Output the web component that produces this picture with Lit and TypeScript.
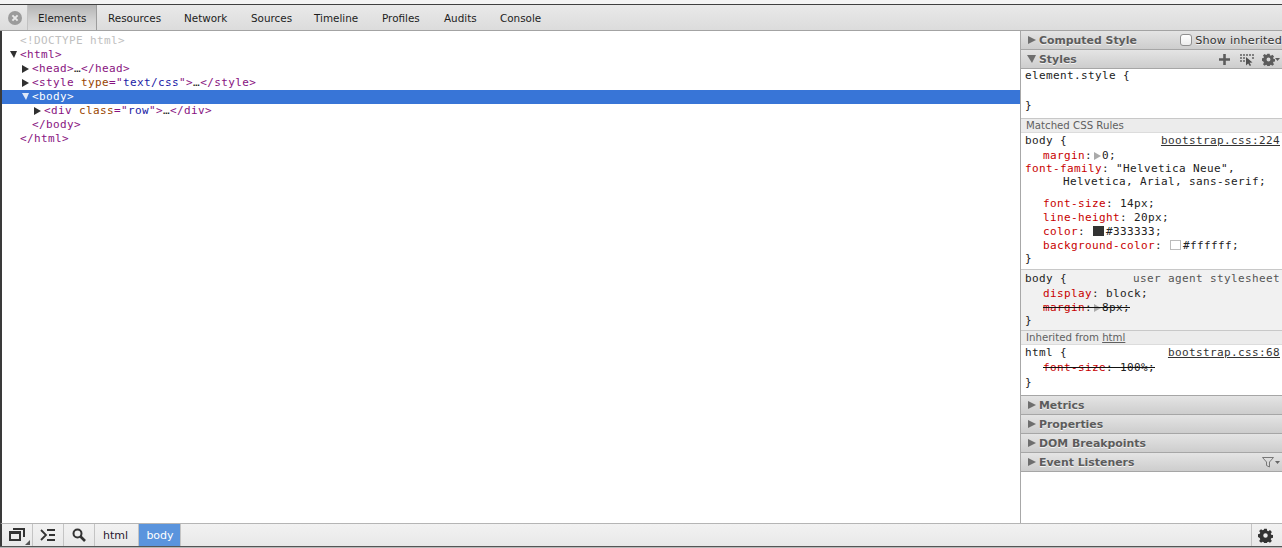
import { LitElement, html, css } from "lit";
import { customElement } from "lit/decorators.js";

const gear = (size: number, fill: string) => html`<svg width=${size} height=${size} viewBox="0 0 16 16"><path fill=${fill} fill-rule="evenodd" d="M6.6 0.8h2.8l.4 2.1 1.2.5 1.8-1.2 2 2-1.2 1.8.5 1.2 2.1.4v2.8l-2.1.4-.5 1.2 1.2 1.8-2 2-1.8-1.2-1.2.5-.4 2.1H6.6l-.4-2.1-1.2-.5-1.8 1.2-2-2 1.2-1.8-.5-1.2L-.2 9.4V6.6l2.1-.4.5-1.2L1.2 3.2l2-2L5 2.4l1.2-.5zM8 5.6a2.4 2.4 0 1 0 0 4.8 2.4 2.4 0 0 0 0-4.8z"/></svg>`;

const tabs = ["Elements", "Resources", "Network", "Sources", "Timeline", "Profiles", "Audits", "Console"];

@customElement("app-root")
export class AppRoot extends LitElement {
  static styles = css`
    :host { display: flex; flex-direction: column; height: 548px; width: 1282px; overflow: hidden; background: #fff; box-sizing: border-box; font-family: "DejaVu Sans Mono", monospace; font-size: 11px; color: #222; }
    .top { height: 4px; background: #f4f4f4; flex: none; }
    .toolbar { height: 27px; flex: none; box-sizing: border-box; display: flex; align-items: stretch; border-top: 1px solid #404040; border-bottom: 1px solid #a3a3a3; background: linear-gradient(#e9e9e9, #dcdcdc); font-family: "DejaVu Sans", sans-serif; font-size: 10.4px; color: #1d1d1d; padding-left: 2px; }
    .close { width: 25px; display: flex; align-items: center; justify-content: center; flex: none; }
    .tab { padding: 1px 11px 0; display: flex; align-items: center; flex: none; white-space: nowrap; box-sizing: content-box; }
    .tab.w0 { width: 48px; background: linear-gradient(#b4b4b4, #d2d2d2 60%, #dcdcdc); border-left: 1px solid #c2c2c2; border-right: 1px solid #9c9c9c; padding: 1px 10px 0; }
    .tab.w1 { width: 54px; } .tab.w2 { width: 45px; } .tab.w3 { width: 41px; } .tab.w4 { width: 46px; } .tab.w5 { width: 40px; } .tab.w6 { width: 34px; } .tab.w7 { width: 43px; }
    .main { flex: 1; display: flex; min-height: 0; border-left: 2px solid #3a3a3a; }
    .tree { flex: 1; padding-top: 3px; min-width: 0; }
    .line { height: 14px; line-height: 14px; white-space: pre; letter-spacing: 0.38px; display: flex; align-items: center; }
    .in0 { padding-left: 18px; } .in1 { padding-left: 30px; } .in2 { padding-left: 42px; }
    .tg { color: #881280; } .an { color: #994500; } .av { color: #1a1aa6; }
    .doctype { color: #c0c0c0; }
    .sel { background: #3875d7; color: #fff; }
    .sel .tg { color: #fff; }
    .ar { width: 0; height: 0; margin-left: -10px; margin-right: 3px; flex: none; }
    .ar.rt { border-left: 7px solid #303030; border-top: 4px solid transparent; border-bottom: 4px solid transparent; }
    .ar.dn { border-top: 7px solid #303030; border-left: 4px solid transparent; border-right: 3px solid transparent; margin-top: -2px; }
    .sel .ar.dn { border-top-color: #dfe9f8; }

    .side { width: 261px; flex: none; border-left: 1px solid #a8a8a8; display: flex; flex-direction: column; }
    .hd { height: 19px; box-sizing: border-box; flex: none; display: flex; align-items: center; padding-left: 7px; border-bottom: 1px solid #a6a6a6; background: linear-gradient(#e4e4e4, #cdcdcd); font-family: "DejaVu Sans", sans-serif; font-weight: bold; font-size: 10.9px; color: #5c5c5c; text-shadow: 0 1px 0 #f4f4f4; white-space: nowrap; }
    .hd .t { width: 0; height: 0; flex: none; margin-right: 3px; }
    .hd .t.rt { border-left: 8px solid #6e6e6e; border-top: 4.5px solid transparent; border-bottom: 4.5px solid transparent; }
    .hd .t.dn { border-top: 8px solid #6e6e6e; border-left: 5px solid transparent; border-right: 4px solid transparent; margin-left: -1px; }
    .sp { flex: 1; }
    .inh { display: flex; align-items: center; font-weight: normal; color: #333; font-size: 11.2px; letter-spacing: 0.2px; gap: 3px; padding-right: 0; }
    .cb { width: 12px; height: 12px; box-sizing: border-box; border: 1px solid #8f8f8f; border-radius: 3px; background: linear-gradient(#fff, #ececec); }
    .icons { display: flex; align-items: center; padding-right: 2px; }
    .hd svg { display: block; }
    .ic2 { margin-left: 10px; } .ic3 { margin-left: 8px; display: flex; align-items: center; } .ic4 { margin-left: -1px; }
    .block { padding: 0 2px 0 4px; }
    .row { height: 14px; line-height: 14px; white-space: pre; letter-spacing: 0.38px; display: flex; justify-content: space-between; align-items: center; }
    .p { padding-left: 18px; display: flex; align-items: center; }
    .p2 { padding-left: 38px; }
    .nm { color: #c80000; }
    .link { color: #333; text-decoration: underline; }
    .ua { color: #555; }
    .b1 { height: 49px; flex: none; box-sizing: border-box; }
    .sub { height: 15px; box-sizing: border-box; flex: none; background: #ececec; border-top: 1px solid #c8c8c8; border-bottom: 1px solid #dcdcdc; padding-left: 5px; font-family: "DejaVu Sans", sans-serif; font-size: 10.2px; line-height: 13px; color: #5f5f5f; white-space: nowrap; }
    .sub u { color: #5f5f5f; }
    .b2 { flex: none; height: 137px; box-sizing: border-box; padding-top: 1px; border-bottom: 1px solid #c8c8c8; }
    .b3 { flex: none; height: 60px; box-sizing: border-box; padding-top: 2px; background: #f1f1f1; }
    .b4 { flex: none; height: 51px; box-sizing: border-box; padding-top: 1px; border-bottom: 1px solid #a6a6a6; }
    .mt1 { margin-top: 1px; } .mt8 { margin-top: 8px; } .mt16 { margin-top: 16px; } .mtn1 { margin-top: -1px; }
    .tri { width: 0; height: 0; border-left: 7px solid #aaa; border-top: 4px solid transparent; border-bottom: 4px solid transparent; margin: 0 1px 0 2px; }
    .sw { width: 11px; height: 10px; box-sizing: border-box; margin: 0 2px 3px 1px; border: 1px solid #bbb; }
    .sw.dark { background: #333; border-color: #333; }
    .strike { position: relative; display: flex; align-items: center; }
    .strike::after { content: ""; position: absolute; left: 18px; right: 0; top: 6px; height: 1px; background: #111; }

    .status { height: 23px; flex: none; box-sizing: border-box; display: flex; align-items: stretch; border-top: 1px solid #b5b5b5; background: linear-gradient(#f2f2f2, #e8e8e8); border-left: 2px solid #3a3a3a; font-family: "DejaVu Sans", sans-serif; font-size: 11px; }
    .btn { width: 30px; flex: none; display: flex; align-items: center; justify-content: center; border-right: 1px solid #c4c4c4; position: relative; }
    .corner { position: absolute; right: 2px; bottom: 1px; width: 0; height: 0; border-left: 5px solid transparent; border-bottom: 5px solid #555; }
    .crumb { display: flex; align-items: center; justify-content: center; flex: none; box-sizing: border-box; }
    .crumb.c1 { width: 44px; padding-right: 2px; border-right: 1px solid #c4c4c4; color: #2a1830; }
    .crumb.c2 { width: 42px; padding-left: 1px; background: #5a94dd; color: #fff; border-right: 1px solid #c4c4c4; }
    .btn.g { width: 31px; padding-right: 3px; box-sizing: border-box; border-right: none; border-left: 1px solid #c4c4c4; }
    .bottom { height: 2px; flex: none; background: #b8b8b8; border-top: 1px solid #555; box-sizing: border-box; }
  `;

  render() {
    return html`
      <div class="top"></div>
      <div class="toolbar">
        <div class="close">
          <svg width="14" height="14" viewBox="0 0 14 14"><circle cx="7" cy="7" r="7" fill="#9b9b9b"/><path d="M4.4 4.4l5.2 5.2M9.6 4.4l-5.2 5.2" stroke="#e8e8e8" stroke-width="2"/></svg>
        </div>
        ${tabs.map((t, i) => html`<div class="tab w${i}">${t}</div>`)}
      </div>
      <div class="main">
        <div class="tree">
          <div class="line in0 doctype">&lt;!DOCTYPE html&gt;</div>
          <div class="line in0"><span class="ar dn"></span><span class="tg">&lt;html&gt;</span></div>
          <div class="line in1"><span class="ar rt"></span><span class="tg">&lt;head&gt;</span>…<span class="tg">&lt;/head&gt;</span></div>
          <div class="line in1"><span class="ar rt"></span><span><span class="tg">&lt;style</span> <span class="an">type</span><span class="tg">="</span><span class="av">text/css</span><span class="tg">"&gt;</span>…<span class="tg">&lt;/style&gt;</span></span></div>
          <div class="line in1 sel"><span class="ar dn"></span><span class="tg">&lt;body&gt;</span></div>
          <div class="line in2"><span class="ar rt"></span><span><span class="tg">&lt;div</span> <span class="an">class</span><span class="tg">="</span><span class="av">row</span><span class="tg">"&gt;</span>…<span class="tg">&lt;/div&gt;</span></span></div>
          <div class="line in1"><span class="tg">&lt;/body&gt;</span></div>
          <div class="line in0"><span class="tg">&lt;/html&gt;</span></div>
        </div>
        <div class="side">
          <div class="hd"><span class="t rt"></span>Computed Style<span class="sp"></span><span class="inh"><span class="cb"></span>Show inherited</span></div>
          <div class="hd"><span class="t dn"></span>Styles<span class="sp"></span>
            <span class="icons">
              <svg width="11" height="11" viewBox="0 0 11 11"><path d="M4.2 0h2.6v4.2H11v2.6H6.8V11H4.2V6.8H0V4.2h4.2z" fill="#5c5c5c"/></svg>
              <svg class="ic2" width="14" height="13" viewBox="0 0 14 13"><path d="M0 1h2v2H0zM3 1h2v2H3zM6 1h2v2H6zM9 1h2v2H9zM12 1h2v2h-2zM0 4h2v2H0zM3 4h2v2H3zM0 7h2v2H0zM3 7h2v2H3zM12 4h2v2h-2z" fill="#808080"/><path d="M6 4l0 8.5 2.2-2 1.6 2.5 1.3-.8-1.5-2.4 2.9-.3z" fill="#505050"/></svg>
              <span class="ic3">${gear(13, "#5c5c5c")}<svg width="5" height="3" viewBox="0 0 5 3"><path d="M0 0h5L2.5 3z" fill="#5c5c5c"/></svg></span>
            </span>
          </div>
          <div class="block b1">
            <div class="row">element.style {</div>
            <div class="row mt16">}</div>
          </div>
          <div class="sub">Matched CSS Rules</div>
          <div class="block b2">
            <div class="row"><span>body {</span><span class="link">bootstrap.css:224</span></div>
            <div class="row mt1"><span class="p"><span class="nm">margin</span>:<span class="tri"></span>0;</span></div>
            <div class="row mtn1"><span><span class="nm">font-family</span>: "Helvetica Neue",</span></div>
            <div class="row mtn1"><span class="p2">Helvetica, Arial, sans-serif;</span></div>
            <div class="row mt8"><span class="p"><span class="nm">font-size</span>: 14px;</span></div>
            <div class="row"><span class="p"><span class="nm">line-height</span>: 20px;</span></div>
            <div class="row"><span class="p"><span class="nm">color</span>: <span class="sw dark"></span>#333333;</span></div>
            <div class="row"><span class="p"><span class="nm">background-color</span>: <span class="sw"></span>#ffffff;</span></div>
            <div class="row mtn1">}</div>
          </div>
          <div class="block b3">
            <div class="row"><span>body {</span><span class="ua">user agent stylesheet</span></div>
            <div class="row mt1"><span class="p"><span class="nm">display</span>: block;</span></div>
            <div class="row"><span class="p strike"><span class="nm">margin</span>:<span class="tri"></span>8px;</span></div>
            <div class="row mtn1">}</div>
          </div>
          <div class="sub">Inherited from <u>html</u></div>
          <div class="block b4">
            <div class="row"><span>html {</span><span class="link">bootstrap.css:68</span></div>
            <div class="row mt1"><span class="p strike"><span class="nm">font-size</span>: 100%;</span></div>
            <div class="row mt1">}</div>
          </div>
          <div class="hd"><span class="t rt"></span>Metrics</div>
          <div class="hd"><span class="t rt"></span>Properties</div>
          <div class="hd"><span class="t rt"></span>DOM Breakpoints</div>
          <div class="hd"><span class="t rt"></span>Event Listeners<span class="sp"></span>
            <span class="icons">
              <svg width="14" height="11" viewBox="0 0 14 11"><path d="M.5.5h11L7.5 5v5L4.5 8.5V5z" fill="none" stroke="#777"/></svg><svg class="ic4" width="5" height="3" viewBox="0 0 5 3"><path d="M0 0h5L2.5 3z" fill="#666"/></svg>
            </span>
          </div>
        </div>
      </div>
      <div class="status">
        <div class="btn">
          <svg width="16" height="14" viewBox="0 0 16 14"><path d="M4 1h11v8M1 4h10v8H1z" fill="none" stroke="#333" stroke-width="2"/><path d="M1 5h10" stroke="#333" stroke-width="2"/></svg>
          <span class="corner"></span>
        </div>
        <div class="btn">
          <svg width="16" height="12" viewBox="0 0 16 12"><path d="M1 1l5 5-5 5" fill="none" stroke="#333" stroke-width="1.8"/><path d="M7 1h8M9 6h6M7 11h8" stroke="#333" stroke-width="1.8"/></svg>
        </div>
        <div class="btn">
          <svg width="14" height="14" viewBox="0 0 14 14"><circle cx="5.5" cy="5.5" r="4" fill="none" stroke="#333" stroke-width="2"/><path d="M8.5 8.5l4.5 4.5" stroke="#333" stroke-width="2.6"/></svg>
        </div>
        <div class="crumb c1">html</div>
        <div class="crumb c2">body</div>
        <div class="sp"></div>
        <div class="btn g">${gear(15, "#333")}</div>
      </div>
      <div class="bottom"></div>
    `;
  }
}
